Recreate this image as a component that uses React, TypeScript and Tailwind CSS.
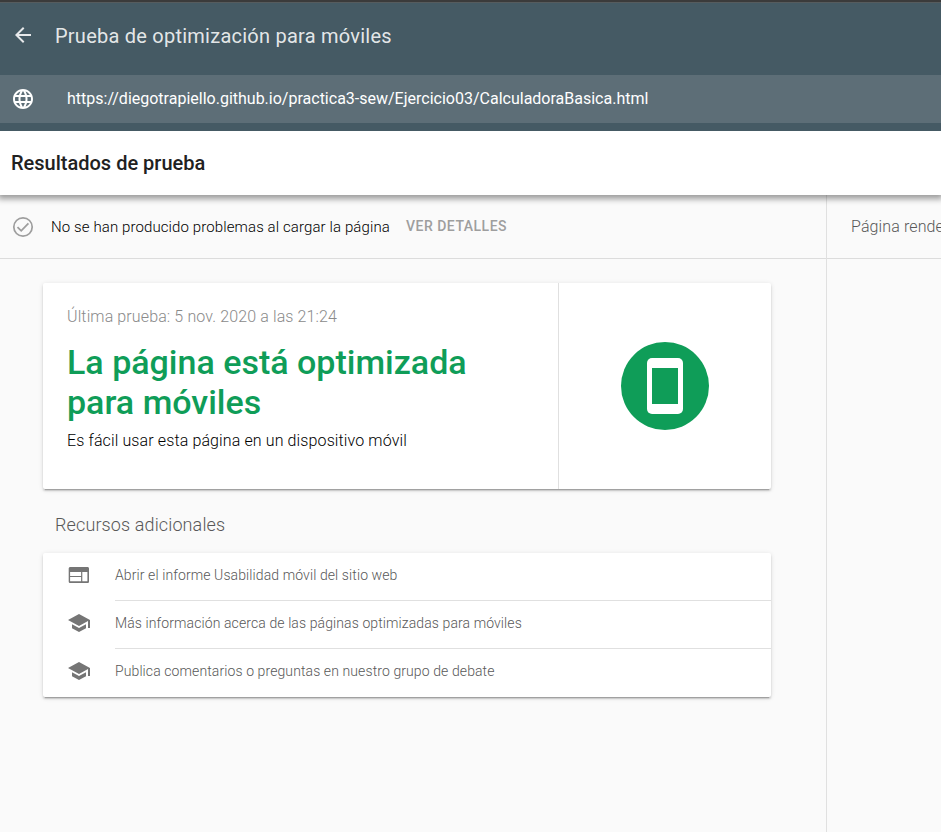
import type { ReactNode } from "react";

function Icon({ d, className }: { d: string; className: string }) {
  return (
    <svg viewBox="0 0 24 24" fill="currentColor" className={className}>
      <path d={d} />
    </svg>
  );
}

const BACK = "M20 11H7.83l5.59-5.59L12 4l-8 8 8 8 1.41-1.41L7.83 13H20v-2z";
const GLOBE =
  "M11.99 2C6.47 2 2 6.48 2 12s4.47 10 9.99 10C17.52 22 22 17.52 22 12S17.52 2 11.99 2zm6.93 6h-2.95c-.32-1.25-.78-2.45-1.38-3.56 1.84.63 3.37 1.91 4.33 3.56zM12 4.04c.83 1.2 1.48 2.53 1.91 3.96h-3.82c.43-1.43 1.08-2.76 1.91-3.96zM4.26 14C4.1 13.36 4 12.69 4 12s.1-1.36.26-2h3.38c-.08.66-.14 1.32-.14 2 0 .68.06 1.34.14 2H4.26zm.82 2h2.95c.32 1.25.78 2.45 1.38 3.56-1.84-.63-3.37-1.9-4.33-3.56zm2.95-8H5.08c.96-1.66 2.49-2.93 4.33-3.56C8.81 5.55 8.35 6.75 8.03 8zM12 19.96c-.83-1.2-1.48-2.53-1.91-3.96h3.82c-.43 1.43-1.08 2.76-1.91 3.96zM14.34 14H9.66c-.09-.66-.16-1.32-.16-2 0-.68.07-1.35.16-2h4.68c.09.65.16 1.32.16 2 0 .68-.07 1.34-.16 2zm.25 5.56c.6-1.11 1.06-2.31 1.38-3.56h2.95c-.96 1.65-2.49 2.93-4.33 3.56zM16.36 14c.08-.66.14-1.32.14-2 0-.68-.06-1.34-.14-2h3.38c.16.64.26 1.31.26 2s-.1 1.36-.26 2h-3.38z";
const WEB =
  "M20.5 4h-17C2.4 4 1.7 4.7 1.7 5.6v12.8c0 .9.7 1.6 1.8 1.6h17c.9 0 1.5-.7 1.5-1.6V5.6c0-.9-.6-1.6-1.5-1.6zM14.1 18.2H3.1V14h11v4.2zm0-5.2H3.1V9h11v4zm6.3 5.2h-5.1V9h5.1v9.2z";
const SCHOOL = "M5 13.18v4L12 21l7-3.82v-4L12 17l-7-3.82zM12 3L1 9l11 6 9-4.91V17h2V9L12 3z";

const resources = [
  { icon: WEB, label: "Abrir el informe Usabilidad móvil del sitio web" },
  { icon: SCHOOL, label: "Más información acerca de las páginas optimizadas para móviles" },
  { icon: SCHOOL, label: "Publica comentarios o preguntas en nuestro grupo de debate" },
];

function Card({ className, children }: { className: string; children: ReactNode }) {
  return (
    <div
      className={
        "flex w-[728px] rounded-[2px] bg-white shadow-[0_2px_2px_0_rgba(0,0,0,0.14),0_3px_1px_-2px_rgba(0,0,0,0.2),0_1px_5px_0_rgba(0,0,0,0.12)] " +
        className
      }
    >
      {children}
    </div>
  );
}

export default function App() {
  return (
    <div className="flex h-[832px] w-full flex-col overflow-hidden bg-[#fafafa] font-['Roboto',sans-serif] whitespace-nowrap text-[#212121]">
      <header className="relative z-20 flex h-[131px] shrink-0 flex-col border-t-2 border-[#3b3b3b] bg-[#455a64]">
        <div className="h-px bg-[#565c5e]" />
        <div className="flex h-[72px] items-center pb-[6px] pl-[11px] text-white/87">
          <Icon d={BACK} className="size-6 -translate-y-px" />
          <h1 className="ml-5 text-[20px] tracking-[0.24px]">Prueba de optimización para móviles</h1>
        </div>
        <div className="flex h-12 items-center bg-[#5d6e77] pl-[11px] text-white">
          <Icon d={GLOBE} className="size-6" />
          <span className="ml-8 text-[16px]">
            https://diegotrapiello.github.io/practica3-sew/Ejercicio03/CalculadoraBasica.html
          </span>
        </div>
      </header>

      <div className="z-10 flex h-16 shrink-0 items-center bg-white pl-[11px] shadow-[0_2px_6px_2px_rgba(0,0,0,0.38)]">
        <h2 className="text-[20px] font-medium">Resultados de prueba</h2>
      </div>

      <div className="flex min-h-0 flex-1">
        <main className="flex w-[827px] shrink-0 flex-col border-r border-[#e0e0e0]">
          <div className="flex h-16 shrink-0 items-center border-b border-[#dcdcdc] pl-[11px]">
            <svg viewBox="0 0 24 24" fill="none" stroke="#9e9e9e" className="size-6">
              <circle cx="12" cy="12" r="9.2" strokeWidth="1.7" />
              <path d="M6.5 12.2l3.7 3.6 7.2-7.4" strokeWidth="1.8" />
            </svg>
            <span className="ml-4 pt-0.5 text-[15px] font-light tracking-[0.11px] text-black">
              No se han producido problemas al cargar la página
            </span>
            <button className="ml-4 text-[14px] font-medium tracking-[0.5px] text-[#9e9e9e]">VER DETALLES</button>
          </div>

          <div className="flex flex-col pt-6 pl-[43px]">
            <Card className="h-[206px]">
              <section className="flex w-[516px] flex-col border-r border-[#e0e0e0] pt-[22px] pl-6">
                <p className="text-[16px] leading-6 font-light tracking-[0.12px] text-[#8a8a8a]">
                  Última prueba: 5 nov. 2020 a las 21:24
                </p>
                <h3 className="mt-[13px] text-[34px] leading-10 font-medium text-[#0f9d58]">
                  La página está optimizada
                  <br />
                  para móviles
                </h3>
                <p className="mt-[7px] text-[16px] leading-6 font-light tracking-[0.12px] text-black">
                  Es fácil usar esta página en un dispositivo móvil
                </p>
              </section>
              <div className="flex flex-1 items-center justify-center">
                <svg viewBox="0 0 88 88" className="size-[88px]">
                  <circle cx="44" cy="44" r="44" fill="#0f9d58" />
                  <rect x="26" y="16" width="36" height="56" rx="5" fill="#fff" />
                  <path d="M31 26h26v36H31z" fill="#0f9d58" />
                </svg>
              </div>
            </Card>

            <h4 className="mt-6 ml-3 text-[18px] leading-6 font-light tracking-[0.12px] text-[#585858]">
              Recursos adicionales
            </h4>

            <Card className="mt-4 flex-col">
              {resources.map((r, i) => (
                <div key={i} className="flex h-12 pl-6">
                  <Icon d={r.icon} className="mt-2.5 size-6 text-[#757575]" />
                  <a
                    className={
                      "ml-6 flex flex-1 items-center pb-[3px] text-[14px] font-light tracking-[0.1px] text-[#585858] " +
                      (i < 2 ? "border-b border-[#e0e0e0]" : "")
                    }
                  >
                    {r.label}
                  </a>
                </div>
              ))}
            </Card>
          </div>
        </main>

        <aside className="flex flex-1 flex-col overflow-hidden">
          <div className="flex h-16 shrink-0 items-center border-b border-[#dcdcdc] pl-6 text-[16px] font-light tracking-[0.12px] text-[#585858]">
            Página renderizada
          </div>
        </aside>
      </div>
    </div>
  );
}
